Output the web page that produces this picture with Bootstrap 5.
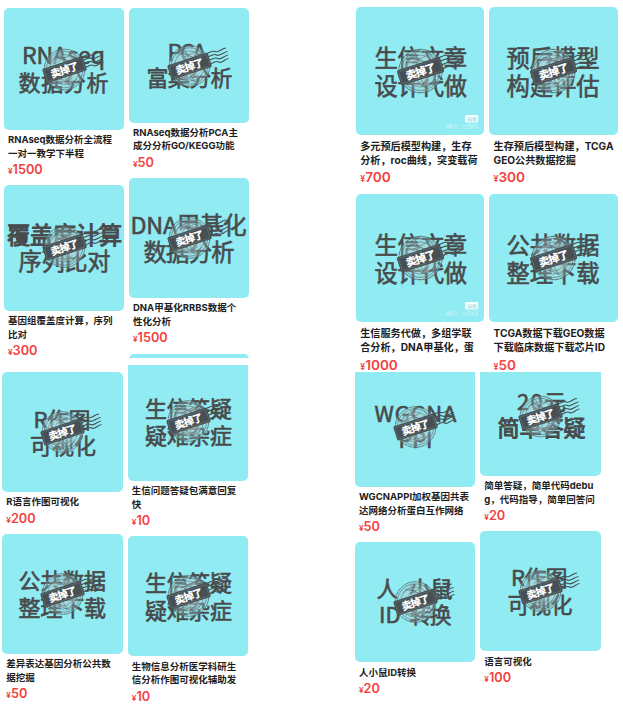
<!DOCTYPE html>
<html lang="zh-CN">
<head>
<meta charset="utf-8">
<meta name="viewport" content="width=device-width, initial-scale=1">
<title>数据分析服务</title>
<link href="https://cdn.jsdelivr.net/npm/bootstrap@5.3.0/dist/css/bootstrap.min.css" rel="stylesheet">
<style>
body{background:#fff;font-family:Inter,"Noto Sans CJK SC",sans-serif;color:#1d1d1d;width:623px;height:707px;overflow:hidden}
.side-l{width:250px}
.side-r{width:268px}
.panel{font-size:9.5px;overflow:hidden;gap:5px}
.panel-lt{height:358px;padding:7.7px 0 0 4px;margin-bottom:7px}
.panel-lb{height:342px;padding-left:2.3px}
.panel-rt{height:372px;padding:7.3px 0 0 1px;font-size:10.15px}
.panel-rb{height:335px}
.shop-col{gap:.73em}
.drop{padding-top:7px}
.cover{display:block;background:#90ebf2;border-radius:5px;overflow:hidden}
.cut{border-radius:0 0 5px 5px}
.cover .art{font-family:"Noto Sans CJK SC",sans-serif;font-size:22px;font-weight:400;fill:#484a4b;stroke:#484a4b;stroke-width:.6}
.cover .latin{font-size:23px}
.cover .xl{font-size:23.3px}
.cover .strong{stroke-width:1}
.cap{padding:.35em 0 0 .42em;line-height:1.42;font-weight:700;white-space:nowrap}
.price{padding:.4em 0 0 .42em;height:1.92em;line-height:1.45;color:#f2423f}
.price b{font-size:1.34em;font-weight:600;line-height:1}
.price i{font-style:normal;font-size:.86em;font-weight:600}
</style>
</head>
<body>
<svg width="0" height="0" class="position-absolute" aria-hidden="true">
<defs>
<symbol id="stamp" viewBox="-30 -30 80 60" overflow="visible">
<g fill="none" stroke="#56666a" stroke-opacity=".8">
<circle r="20.3" stroke-width="1" stroke-dasharray="4 .4" fill="#9fc9cf" fill-opacity=".35"/>
<circle r="18.2" stroke-width=".7"/>
<circle r="15" stroke-width=".6" fill="#b5d3d7" fill-opacity=".35"/>
<path stroke-width=".7" d="M-13-9Q-7-16-1-11T11-11M-10-13Q-2-9 5-14M-7-7Q-2-13 3-8L10-11M-13 10Q-7 5-2 10T8 8M-10 13Q-3 10 2 14T12 9M0 7L5 16M-5-17L-1-8M-17 6L-11 12M8-17L15-7"/>
<path stroke="#484f51" stroke-width="1.15" stroke-opacity="1" d="M16-12.500C19-12 22-16 26-14.500S32-18 36.500-18M18-9.500C21-9 24-13 27-11S34-14 38-14.500M19-6C22-5.500 25-9.500 28-7.500S35-10.500 38.500-11M20-2C23-2 26-6 29-4S35-7 39-7.500"/>
</g>
<g transform="rotate(-18)">
<rect x="-21.300" y="-7.300" width="42.600" height="15" rx="1.800" fill="#465054"/>
<rect x="-19.800" y="-5.800" width="39.600" height="12" rx="1" fill="none" stroke="#6f7c7f" stroke-width=".5"/>
<text x="-14.500" y="4.200" textLength="29" font-size="10.300" font-weight="900" fill="#fff" font-family="Noto Sans CJK SC, sans-serif">卖掉了</text>
</g>
</symbol>
</defs>
</svg>

<main class="d-flex justify-content-between">
<section class="side-l">
<div class="panel panel-lt d-flex">
<div class="shop-col d-flex flex-column">
<article>
<svg class="cover" width="120" height="122.300"><g class="art"><text class="latin" x="18" y="56" textLength="83">RNAseq</text><text x="14.500" y="82.700" textLength="90">数据分析</text></g><use href="#stamp" x="30.500" y="31.500" width="80" height="60"/></svg>
<div class="cap">RNAseq数据分析全流程<br>一对一教学下半程</div><div class="price"><i>¥</i><b>1500</b></div>
</article>
<article>
<svg class="cover" width="120" height="125.700"><g class="art"><text class="xl strong" x="3" y="58.500" textLength="115">覆盖度计算</text><text class="xl" x="14.500" y="84.900" textLength="92">序列比对</text></g><use href="#stamp" x="30.500" y="32" width="80" height="60"/></svg>
<div class="cap">基因组覆盖度计算，序列<br>比对</div><div class="price"><i>¥</i><b>300</b></div>
</article>
</div>
<div class="shop-col d-flex flex-column">
<article>
<svg class="cover" width="120" height="115"><g class="art"><text class="latin" x="38.500" y="53" textLength="39">PCA</text><text x="17.500" y="77.700" textLength="86">富集分析</text></g><use href="#stamp" x="30.500" y="28" width="80" height="60"/></svg>
<div class="cap">RNAseq数据分析PCA主<br>成分分析GO/KEGG功能</div><div class="price"><i>¥</i><b>50</b></div>
</article>
<article>
<svg class="cover" width="120" height="120"><g class="art"><text class="xl" x="1.500" y="55.700" textLength="116">DNA甲基化</text><text class="xl" x="14.500" y="83" textLength="91">数据分析</text></g><use href="#stamp" x="30.500" y="30" width="80" height="60"/></svg>
<div class="cap">DNA甲基化RRBS数据个<br>性化分析</div><div class="price"><i>¥</i><b>1500</b></div>
</article>
<article><svg class="cover" width="120" height="120"></svg></article>
</div>
</div>

<div class="panel panel-lb d-flex">
<div class="shop-col drop d-flex flex-column">
<article>
<svg class="cover" width="120.500" height="120"><g class="art"><text x="31.500" y="55.500" textLength="57">R作图</text><text x="28" y="82" textLength="66">可视化</text></g><use href="#stamp" x="30.500" y="30" width="80" height="60"/></svg>
<div class="cap">R语言作图可视化</div><div class="price"><i>¥</i><b>200</b></div>
</article>
<article>
<svg class="cover" width="120.500" height="120"><g class="art"><text x="16.500" y="55.300" textLength="87.500">公共数据</text><text x="16.500" y="81.700" textLength="87.500">整理下载</text></g><use href="#stamp" x="30.500" y="30" width="80" height="60"/></svg>
<div class="cap">差异表达基因分析公共数<br>据挖掘</div><div class="price"><i>¥</i><b>50</b></div>
</article>
</div>
<div class="shop-col d-flex flex-column">
<article>
<svg class="cover cut" width="120.500" height="116"><g class="art"><text x="17" y="51.500" textLength="87">生信答疑</text><text x="17" y="78.800" textLength="87">疑难杂症</text></g><use href="#stamp" x="30.500" y="26" width="80" height="60"/></svg>
<div class="cap">生信问题答疑包满意回复<br>快</div><div class="price"><i>¥</i><b>10</b></div>
</article>
<article>
<svg class="cover" width="120.500" height="120"><g class="art"><text x="17" y="55.300" textLength="87">生信答疑</text><text x="17" y="82.500" textLength="87">疑难杂症</text></g><use href="#stamp" x="30.500" y="30" width="80" height="60"/></svg>
<div class="cap">生物信息分析医学科研生<br>信分析作图可视化辅助发</div><div class="price"><i>¥</i><b>10</b></div>
</article>
</div>
</div>
</section>

<section class="side-r">
<div class="panel panel-rt d-flex">
<div class="shop-col d-flex flex-column">
<article>
<svg class="cover" width="128.300" height="127.700"><g class="art"><text class="xl" x="18.500" y="60" textLength="92.500">生信文章</text><text class="xl" x="18.500" y="87.900" textLength="92.500">设计代做</text></g><use href="#stamp" x="32.500" y="32" width="85.300" height="64"/><rect x="109" y="108" width="13.300" height="7.500" rx="1.500" fill="#f4ffff"/><text x="111.200" y="113.700" font-size="5" fill="#8dd3d8">闲鱼</text><text x="89" y="121.300" font-size="4.300" textLength="33" fill="#d2f7f9">闲鱼号：生信唐道</text></svg>
<div class="cap">多元预后模型构建，生存<br>分析，roc曲线，突变载荷</div><div class="price"><i>¥</i><b>700</b></div>
</article>
<article>
<svg class="cover" width="128.300" height="128"><g class="art"><text class="xl" x="18.500" y="60" textLength="92.500">生信文章</text><text class="xl" x="18.500" y="87.900" textLength="92.500">设计代做</text></g><use href="#stamp" x="32.500" y="32" width="85.300" height="64"/><rect x="109" y="108" width="13.300" height="7.500" rx="1.500" fill="#f4ffff"/><text x="111.200" y="113.700" font-size="5" fill="#8dd3d8">闲鱼</text><text x="89" y="121.300" font-size="4.300" textLength="33" fill="#d2f7f9">闲鱼号：生信唐道</text></svg>
<div class="cap">生信服务代做，多组学联<br>合分析，DNA甲基化，蛋</div><div class="price"><i>¥</i><b>1000</b></div>
</article>
</div>
<div class="shop-col d-flex flex-column">
<article>
<svg class="cover" width="128.300" height="127.700"><g class="art"><text class="xl" x="17.500" y="60" textLength="93">预后模型</text><text class="xl" x="17.500" y="87.900" textLength="93">构建评估</text></g><use href="#stamp" x="32.500" y="32" width="85.300" height="64"/></svg>
<div class="cap">生存预后模型构建，TCGA<br>GEO公共数据挖掘</div><div class="price"><i>¥</i><b>300</b></div>
</article>
<article>
<svg class="cover" width="128.300" height="128"><g class="art"><text class="xl" x="17.500" y="60" textLength="93">公共数据</text><text class="xl" x="17.500" y="87.900" textLength="93">整理下载</text></g><use href="#stamp" x="32.500" y="32" width="85.300" height="64"/></svg>
<div class="cap">TCGA数据下载GEO数据<br>下载临床数据下载芯片ID</div><div class="price"><i>¥</i><b>50</b></div>
</article>
</div>
</div>

<div class="panel panel-rb d-flex">
<div class="shop-col d-flex flex-column">
<article>
<svg class="cover cut" width="120.300" height="115"><g class="art"><text x="19.500" y="50.300" textLength="82">WGCNA</text><text x="43.500" y="76.300" textLength="34">PPI</text></g><use href="#stamp" x="30.500" y="25" width="80" height="60"/></svg>
<div class="cap">WGCNAPPI加权基因共表<br>达网络分析蛋白互作网络</div><div class="price"><i>¥</i><b>50</b></div>
</article>
<article>
<svg class="cover" width="120.300" height="120"><g class="art"><text x="21.500" y="55">人</text><text x="54" y="55" textLength="43.500">小鼠</text><text x="24" y="81">ID</text><text x="54.500" y="81" textLength="42">转换</text></g><use href="#stamp" x="30.500" y="30" width="80" height="60"/></svg>
<div class="cap">人小鼠ID转换</div><div class="price"><i>¥</i><b>20</b></div>
</article>
</div>
<div class="shop-col d-flex flex-column">
<article>
<svg class="cover cut" width="120.300" height="104"><g class="art"><text x="37" y="37.700" textLength="49">20元</text><text class="strong" x="17.500" y="63.700" textLength="88">简单答疑</text></g><use href="#stamp" x="30.500" y="14.500" width="80" height="60"/></svg>
<div class="cap">简单答疑，简单代码debu<br>g，代码指导，简单回答问</div><div class="price"><i>¥</i><b>20</b></div>
</article>
<article>
<svg class="cover" width="120.300" height="120"><g class="art"><text x="31" y="54.500" textLength="56.500">R作图</text><text x="27.500" y="81.500" textLength="65">可视化</text></g><use href="#stamp" x="30.500" y="30" width="80" height="60"/></svg>
<div class="cap">语言可视化</div><div class="price"><i>¥</i><b>100</b></div>
</article>
</div>
</div>
</section>
</main>
<script src="https://cdn.jsdelivr.net/npm/bootstrap@5.3.0/dist/js/bootstrap.bundle.min.js"></script>
</body>
</html>
